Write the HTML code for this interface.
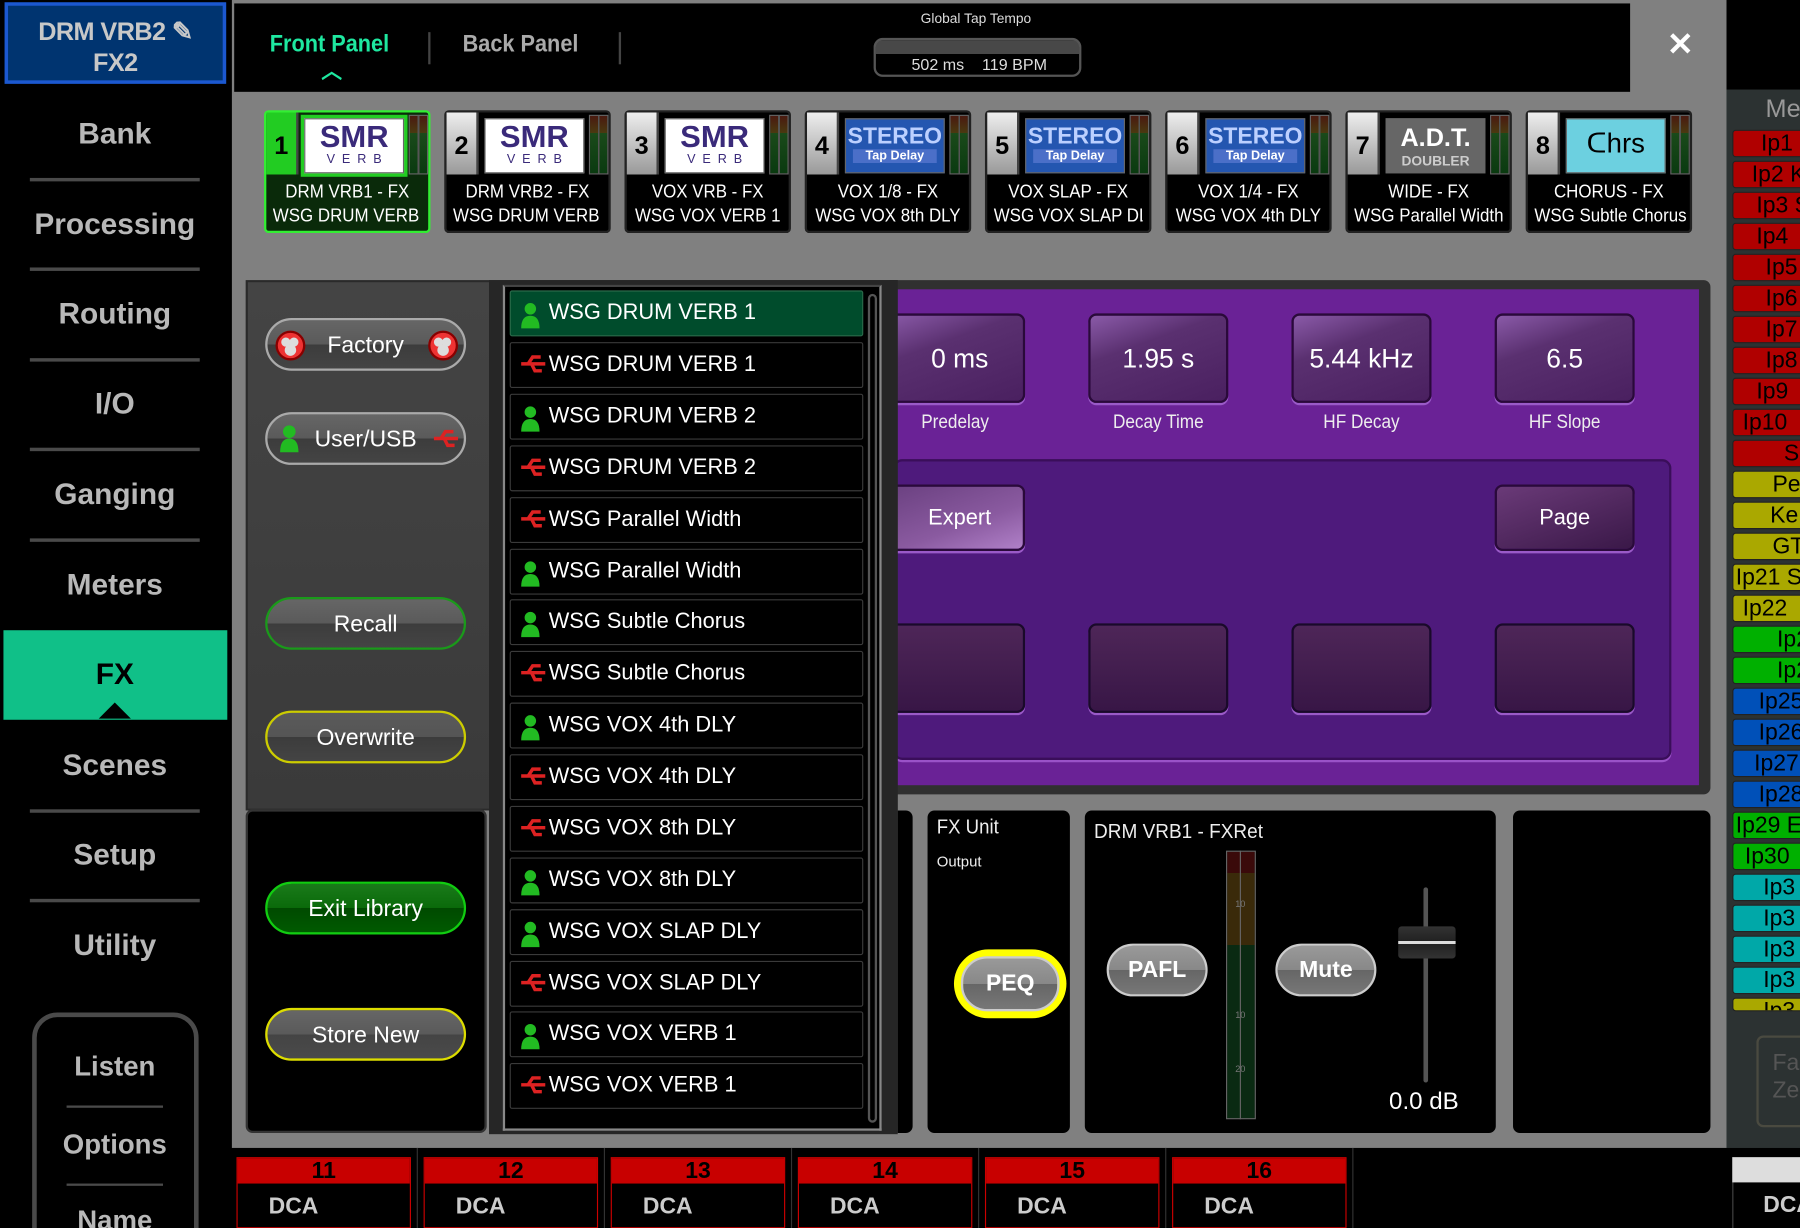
<!DOCTYPE html>
<html><head><meta charset="utf-8">
<style>
*{margin:0;padding:0;box-sizing:border-box}
html,body{width:1800px;height:1228px;overflow:hidden;background:#000;font-family:"Liberation Sans",Arial,sans-serif}
#w{position:absolute;left:0;top:0;width:1568px;height:1070px;transform:scale(1.14796);transform-origin:0 0;background:#000;overflow:hidden}
.a{position:absolute}
.nav{position:absolute;left:0;width:200px;text-align:center;color:#b8b8b8;font-size:26px;font-weight:bold}
.sep{position:absolute;left:26px;width:148px;height:3px;background:#4a4a4a}
.card{position:absolute;top:96px;width:145px;height:107px;background:#000;border-radius:4px;border:2px solid #222}
.card .num{position:absolute;left:0;top:0;width:28px;height:54px;background:linear-gradient(#eee,#999);color:#000;font-size:22px;font-weight:bold;text-align:center;line-height:58px;border-right:2px solid #444}
.card .logo{position:absolute;left:30px;top:2px;width:93px;height:54px;background:#000;padding:3px}
.card .logo div{width:100%;height:100%;border:1px solid #666}
.card .met{position:absolute;left:124px;top:2px;width:17px;height:52px;background:linear-gradient(90deg,transparent 0 45%,#555 45% 55%,transparent 55%),linear-gradient(#4a1a10 0%,#4a3a10 30%,#1a4a1a 30%,#0a3a10 100%);border:1px solid #666}
.card .t1{position:absolute;left:0;right:0;top:61px;text-align:center;color:#fff;font-size:16px;transform:scaleX(.92)}
.card .t2{position:absolute;left:0;right:0;top:82px;text-align:center;color:#fff;font-size:16px;transform:scaleX(.92);white-space:nowrap}
.smr{background:#fff;color:#3a2a7a;text-align:center;font-weight:bold;font-size:27px;line-height:27px;padding-top:2px}
.smr span{display:block;font-size:11px;letter-spacing:6px;font-weight:normal;line-height:12px;margin-left:6px}
.st{background:#2456b0;color:#bcd0ff;text-align:center;font-weight:bold;font-size:20px;line-height:22px;padding-top:4px}
.st span{display:block;font-size:11px;line-height:12px;background:#4b6fc8;margin:0 6px;color:#fff}
.row{position:absolute;left:444px;width:308px;height:40px;background:#000;border:1px solid #3a3a3a;border-radius:2px;color:#fff;font-size:19px;line-height:38px;padding-left:33px}
.row svg{position:absolute;left:8px;top:9px}
.pill{position:absolute;left:231px;width:175px;height:46px;border-radius:23px;background:linear-gradient(#666 0%,#5a5a5a 50%,#3c3c3c 50%,#444 100%);color:#fff;font-size:20px;text-align:center;line-height:44px;border:2px solid #aaa}
.kb{position:absolute;top:273px;width:122px;height:78px;border-radius:7px;background:linear-gradient(160deg,#8a5aa8 0%,#5a3070 35%,#4a2060 100%);border:2px solid #2a0a3a;box-shadow:0 2px 0 #9a5ac8;color:#fff;font-size:23px;text-align:center;line-height:74px}
.kl{position:absolute;top:358px;width:122px;text-align:center;color:#eee;font-size:17px;transform:scaleX(.88)}
.eb{position:absolute;top:543px;width:122px;height:78px;border-radius:7px;background:linear-gradient(#4e2658,#381646);border:2px solid #1a0a2a;box-shadow:0 2px 0 #9a5ac8}
.gb{position:absolute;height:46px;border-radius:23px;background:linear-gradient(#999 0%,#888 50%,#666 50%,#777 100%);border:2px solid #ccc;color:#fff;font-size:20px;font-weight:bold;text-align:center;line-height:42px}
.dca{position:absolute;top:1008px;width:152px;height:62px;border:1px solid #c00;background:#000}
.dca .h{height:22px;background:#c80000;color:#000;font-size:20px;font-weight:bold;text-align:center;line-height:22px}
.dca .d{color:#ccc;font-size:20px;font-weight:bold;padding:9px 0 0 27px}
.ip{position:absolute;left:1509px;width:70px;height:24px;border:1px solid #222;border-radius:3px;color:#000;font-size:20px;line-height:22px;padding-left:6px;white-space:nowrap;overflow:hidden}
.r{background:#b00000}.y{background:#aaa800}.g{background:#00b000}.b{background:#0050b8}.c{background:#00a8a8}
</style></head><body><div id="w">

<div class="a" style="left:4px;top:2px;width:193px;height:71px;background:#003470;border:3px solid #1c58d0;color:#c8c8c8;font-size:22px;font-weight:bold;text-align:center;line-height:27px;padding-top:9px;letter-spacing:-0.5px">DRM VRB2 ✎<br>FX2</div>
<div class="nav" style="top:101px">Bank</div><div class="sep" style="top:155px"></div>
<div class="nav" style="top:180px">Processing</div><div class="sep" style="top:233px"></div>
<div class="nav" style="top:258px">Routing</div><div class="sep" style="top:312px"></div>
<div class="nav" style="top:336px">I/O</div><div class="sep" style="top:390px"></div>
<div class="nav" style="top:415px">Ganging</div><div class="sep" style="top:469px"></div>
<div class="nav" style="top:494px">Meters</div>
<div class="a" style="left:3px;top:549px;width:195px;height:78px;background:#10c088"></div>
<div class="nav" style="top:572px;color:#000">FX</div>
<div class="a" style="left:86px;top:612px;width:0;height:0;border-left:14px solid transparent;border-right:14px solid transparent;border-bottom:14px solid #000"></div>
<div class="nav" style="top:651px">Scenes</div><div class="sep" style="top:705px"></div>
<div class="nav" style="top:729px">Setup</div><div class="sep" style="top:783px"></div>
<div class="nav" style="top:808px">Utility</div>
<div class="a" style="left:28px;top:882px;width:145px;height:220px;border:4px solid #4a4a4a;border-radius:22px"></div>
<div class="nav" style="top:916px;font-size:24px">Listen</div><div class="a" style="left:58px;top:963px;width:84px;height:2px;background:#4a4a4a"></div>
<div class="nav" style="top:984px;font-size:24px">Options</div><div class="a" style="left:58px;top:1031px;width:84px;height:2px;background:#4a4a4a"></div>
<div class="nav" style="top:1050px;font-size:24px">Name</div>

<div class="a" style="left:202px;top:0;width:1302px;height:1000px;background:#808080"></div>
<div class="a" style="left:204px;top:3px;width:1216px;height:77px;background:#000"></div>
<div class="a" style="left:235px;top:27px;color:#1ee8a0;font-size:21px;font-weight:bold;transform:scaleX(.9);transform-origin:0 0">Front Panel</div>
<div class="a" style="left:280px;top:48px;color:#1ee8a0;font-size:18px;font-weight:bold">︿</div>
<div class="a" style="left:373px;top:28px;width:2px;height:28px;background:#444"></div>
<div class="a" style="left:403px;top:27px;color:#aaa;font-size:21px;font-weight:bold;transform:scaleX(.9);transform-origin:0 0">Back Panel</div>
<div class="a" style="left:539px;top:28px;width:2px;height:28px;background:#444"></div>
<div class="a" style="left:802px;top:9px;color:#ddd;font-size:12px">Global Tap Tempo</div>
<div class="a" style="left:761px;top:33px;width:181px;height:34px;border:2px solid #555;border-radius:8px;background:linear-gradient(#484848 0 40%,#000 40%)"></div>
<div class="a" style="left:794px;top:48px;color:#ddd;font-size:14px">502 ms&nbsp;&nbsp;&nbsp;&nbsp;119 BPM</div>
<div class="a" style="left:1452px;top:22px;color:#fff;font-size:28px;font-weight:bold">✕</div>

<div class="card" style="left:230px;background:#0a2a0a;border-color:#3e3"><div class="num" style="background:#2c2">1</div><div class="logo" style="background:#2c2"><div class="smr">SMR<span>VERB</span></div></div><div class="met"></div><div class="t1">DRM VRB1 - FX</div><div class="t2" style="height:20px;overflow:hidden">WSG DRUM VERB 1</div></div>
<div class="card" style="left:387px"><div class="num">2</div><div class="logo"><div class="smr">SMR<span>VERB</span></div></div><div class="met"></div><div class="t1">DRM VRB2 - FX</div><div class="t2" style="height:20px;overflow:hidden">WSG DRUM VERB 2</div></div>
<div class="card" style="left:544px"><div class="num">3</div><div class="logo"><div class="smr">SMR<span>VERB</span></div></div><div class="met"></div><div class="t1">VOX VRB - FX</div><div class="t2">WSG VOX VERB 1</div></div>
<div class="card" style="left:701px"><div class="num">4</div><div class="logo"><div class="st">STEREO<span>Tap Delay</span></div></div><div class="met"></div><div class="t1">VOX 1/8 - FX</div><div class="t2">WSG VOX 8th DLY</div></div>
<div class="card" style="left:858px"><div class="num">5</div><div class="logo"><div class="st">STEREO<span>Tap Delay</span></div></div><div class="met"></div><div class="t1">VOX SLAP - FX</div><div class="t2" style="height:20px;overflow:hidden">WSG VOX SLAP DLY</div></div>
<div class="card" style="left:1015px"><div class="num">6</div><div class="logo"><div class="st">STEREO<span>Tap Delay</span></div></div><div class="met"></div><div class="t1">VOX 1/4 - FX</div><div class="t2">WSG VOX 4th DLY</div></div>
<div class="card" style="left:1172px"><div class="num">7</div><div class="logo"><div style="background:#666;color:#fff;text-align:center;font-weight:bold;font-size:22px;line-height:26px;padding-top:3px">A.D.T.<span style="display:block;font-size:12px;color:#ccc;line-height:14px">DOUBLER</span></div></div><div class="met"></div><div class="t1">WIDE - FX</div><div class="t2">WSG Parallel Width</div></div>
<div class="card" style="left:1329px"><div class="num">8</div><div class="logo"><div style="background:#6cd0e0;color:#000;text-align:center;font-size:24px;line-height:44px">ᑕhrs</div></div><div class="met"></div><div class="t1">CHORUS - FX</div><div class="t2">WSG Subtle Chorus</div></div>

<div class="a" style="left:770px;top:244px;width:720px;height:448px;background:#303030;border-radius:6px"></div>
<div class="a" style="left:778px;top:252px;width:702px;height:432px;background:#6a2296"></div>
<div class="a" style="left:778px;top:400px;width:678px;height:262px;background:#4e1a7c;border:2px solid #3a0e5a;border-radius:8px;box-shadow:0 2px 0 #9a52c8"></div>
<div class="kb" style="left:771px;padding-left:8px">0 ms</div><div class="kl" style="left:771px">Predelay</div>
<div class="kb" style="left:948px">1.95 s</div><div class="kl" style="left:948px">Decay Time</div>
<div class="kb" style="left:1125px">5.44 kHz</div><div class="kl" style="left:1125px">HF Decay</div>
<div class="kb" style="left:1302px">6.5</div><div class="kl" style="left:1302px">HF Slope</div>
<div class="kb" style="left:771px;top:422px;height:58px;line-height:56px;font-size:19px;background:linear-gradient(160deg,#6a4080,#8a5aa0 60%,#b080c8);padding-left:8px">Expert</div>
<div class="kb" style="left:1302px;top:422px;height:58px;line-height:56px;font-size:19px;background:linear-gradient(160deg,#6a3a78,#3a1848)">Page</div>
<div class="eb" style="left:771px"></div><div class="eb" style="left:948px"></div><div class="eb" style="left:1125px"></div><div class="eb" style="left:1302px"></div>

<div class="a" style="left:214px;top:244px;width:568px;height:462px;background:linear-gradient(#444,#3a3a3a);border:2px solid #2a2a2a"></div>
<div class="a" style="left:214px;top:705px;width:210px;height:282px;background:#000;border:2px solid #333;border-radius:6px"></div>
<div class="a" style="left:426px;top:244px;width:356px;height:744px;background:#262626"></div>
<div class="a" style="left:438px;top:248px;width:330px;height:737px;background:#000;border:2px solid #888;border-top-color:#444"></div>
<div class="a" style="left:756px;top:256px;width:8px;height:722px;border:2px solid #555;border-radius:4px"></div>

<div class="pill" style="top:277px">Factory
<svg class="a" style="left:6px;top:8px" width="28" height="28"><circle cx="14" cy="14" r="12" fill="#e33" stroke="#800" stroke-width="2"/><circle cx="10" cy="11" r="4" fill="#ddd"/><circle cx="17" cy="11" r="4" fill="#ddd"/><circle cx="14" cy="18" r="5" fill="#ddd"/></svg>
<svg class="a" style="left:139px;top:8px" width="28" height="28"><circle cx="14" cy="14" r="12" fill="#e33" stroke="#800" stroke-width="2"/><circle cx="10" cy="11" r="4" fill="#ddd"/><circle cx="17" cy="11" r="4" fill="#ddd"/><circle cx="14" cy="18" r="5" fill="#ddd"/></svg></div>
<div class="pill" style="top:359px">User/USB
<svg class="a" style="left:10px;top:8px" width="18" height="26"><circle cx="9" cy="7" r="5.5" fill="#2b2"/><path d="M1 25Q1 13 9 13Q17 13 17 25Z" fill="#2b2"/></svg>
<svg class="a" style="left:144px;top:12px" width="24" height="18"><path d="M1 9H22M7 9L11 3H18M10 9L13 15H19" stroke="#d22" stroke-width="3" fill="none"/></svg></div>
<div class="pill" style="top:520px;border-color:#1a9a1a">Recall</div>
<div class="pill" style="top:619px;border-color:#cc0;background:linear-gradient(#5a5a5a 0%,#555 50%,#3c3c3c 50%,#444 100%)">Overwrite</div>
<div class="pill" style="top:768px;border-color:#1c1;background:linear-gradient(#1a7a1a 0%,#0a6a0a 50%,#004a00 50%,#005a00 100%)">Exit Library</div>
<div class="pill" style="top:878px;border-color:#dd0;background:linear-gradient(#666 0%,#5a5a5a 50%,#444 50%,#4a4a4a 100%)">Store New</div>

<div class="row" style="top:253px;background:#004c2c;border-color:#2a6a4a"><svg width="18" height="24"><circle cx="9" cy="6" r="5" fill="#2b2"/><path d="M1 23Q1 12 9 12Q17 12 17 23Z" fill="#2b2"/></svg>WSG DRUM VERB 1</div>
<div class="row" style="top:298px"><svg width="24" height="18"><path d="M1 9H22M7 9L11 3H18M10 9L13 15H19" stroke="#d22" stroke-width="3" fill="none"/></svg>WSG DRUM VERB 1</div>
<div class="row" style="top:343px"><svg width="18" height="24"><circle cx="9" cy="6" r="5" fill="#2b2"/><path d="M1 23Q1 12 9 12Q17 12 17 23Z" fill="#2b2"/></svg>WSG DRUM VERB 2</div>
<div class="row" style="top:388px"><svg width="24" height="18"><path d="M1 9H22M7 9L11 3H18M10 9L13 15H19" stroke="#d22" stroke-width="3" fill="none"/></svg>WSG DRUM VERB 2</div>
<div class="row" style="top:433px"><svg width="24" height="18"><path d="M1 9H22M7 9L11 3H18M10 9L13 15H19" stroke="#d22" stroke-width="3" fill="none"/></svg>WSG Parallel Width</div>
<div class="row" style="top:478px"><svg width="18" height="24"><circle cx="9" cy="6" r="5" fill="#2b2"/><path d="M1 23Q1 12 9 12Q17 12 17 23Z" fill="#2b2"/></svg>WSG Parallel Width</div>
<div class="row" style="top:522px"><svg width="18" height="24"><circle cx="9" cy="6" r="5" fill="#2b2"/><path d="M1 23Q1 12 9 12Q17 12 17 23Z" fill="#2b2"/></svg>WSG Subtle Chorus</div>
<div class="row" style="top:567px"><svg width="24" height="18"><path d="M1 9H22M7 9L11 3H18M10 9L13 15H19" stroke="#d22" stroke-width="3" fill="none"/></svg>WSG Subtle Chorus</div>
<div class="row" style="top:612px"><svg width="18" height="24"><circle cx="9" cy="6" r="5" fill="#2b2"/><path d="M1 23Q1 12 9 12Q17 12 17 23Z" fill="#2b2"/></svg>WSG VOX 4th DLY</div>
<div class="row" style="top:657px"><svg width="24" height="18"><path d="M1 9H22M7 9L11 3H18M10 9L13 15H19" stroke="#d22" stroke-width="3" fill="none"/></svg>WSG VOX 4th DLY</div>
<div class="row" style="top:702px"><svg width="24" height="18"><path d="M1 9H22M7 9L11 3H18M10 9L13 15H19" stroke="#d22" stroke-width="3" fill="none"/></svg>WSG VOX 8th DLY</div>
<div class="row" style="top:747px"><svg width="18" height="24"><circle cx="9" cy="6" r="5" fill="#2b2"/><path d="M1 23Q1 12 9 12Q17 12 17 23Z" fill="#2b2"/></svg>WSG VOX 8th DLY</div>
<div class="row" style="top:792px"><svg width="18" height="24"><circle cx="9" cy="6" r="5" fill="#2b2"/><path d="M1 23Q1 12 9 12Q17 12 17 23Z" fill="#2b2"/></svg>WSG VOX SLAP DLY</div>
<div class="row" style="top:837px"><svg width="24" height="18"><path d="M1 9H22M7 9L11 3H18M10 9L13 15H19" stroke="#d22" stroke-width="3" fill="none"/></svg>WSG VOX SLAP DLY</div>
<div class="row" style="top:881px"><svg width="18" height="24"><circle cx="9" cy="6" r="5" fill="#2b2"/><path d="M1 23Q1 12 9 12Q17 12 17 23Z" fill="#2b2"/></svg>WSG VOX VERB 1</div>
<div class="row" style="top:926px"><svg width="24" height="18"><path d="M1 9H22M7 9L11 3H18M10 9L13 15H19" stroke="#d22" stroke-width="3" fill="none"/></svg>WSG VOX VERB 1</div>

<div class="a" style="left:782px;top:706px;width:13px;height:281px;background:#000;border-radius:0 6px 6px 0"></div>
<div class="a" style="left:808px;top:706px;width:124px;height:281px;background:#000;border-radius:6px"></div>
<div class="a" style="left:816px;top:710px;color:#eee;font-size:18px;transform:scaleX(.9);transform-origin:0 0">FX Unit</div>
<div class="a" style="left:816px;top:743px;color:#eee;font-size:13px">Output</div>
<div class="a" style="left:831px;top:827px;width:98px;height:60px;border-radius:30px;background:#ff0"></div>
<div class="gb" style="left:837px;top:833px;width:86px;height:48px;line-height:44px">PEQ</div>
<div class="a" style="left:945px;top:706px;width:358px;height:281px;background:#000;border-radius:6px"></div>
<div class="a" style="left:953px;top:714px;color:#eee;font-size:18px;transform:scaleX(.92);transform-origin:0 0">DRM VRB1 - FXRet</div>
<div class="a" style="left:1068px;top:741px;width:26px;height:234px;border:1px solid #666;background:linear-gradient(#3a0a0a 0%,#3a0a0a 8%,#3a2a0a 8%,#3a2a0a 35%,#0a2a12 35%,#0a2a12 100%)"></div>
<div class="a" style="left:1080px;top:741px;width:1px;height:234px;background:#666"></div>
<div class="a" style="left:1076px;top:783px;color:#777;font-size:8px">10</div>
<div class="a" style="left:1076px;top:880px;color:#777;font-size:8px">10</div>
<div class="a" style="left:1076px;top:927px;color:#777;font-size:8px">20</div>
<div class="gb" style="left:964px;top:822px;width:88px">PAFL</div>
<div class="gb" style="left:1111px;top:822px;width:88px">Mute</div>
<div class="a" style="left:1240px;top:773px;width:4px;height:170px;background:#555;border-radius:2px"></div>
<div class="a" style="left:1218px;top:807px;width:50px;height:28px;background:linear-gradient(#333,#222 45%,#ddd 45%,#ddd 55%,#222 55%,#333);border-radius:3px"></div>
<div class="a" style="left:1210px;top:948px;color:#fff;font-size:21px">0.0 dB</div>
<div class="a" style="left:1318px;top:706px;width:172px;height:281px;background:#000;border-radius:6px"></div>

<div class="a" style="left:202px;top:1000px;width:1302px;height:70px;background:#000"></div>
<div class="a" style="left:363px;top:1000px;width:1px;height:70px;background:#333"></div>
<div class="a" style="left:526px;top:1000px;width:1px;height:70px;background:#333"></div>
<div class="a" style="left:689px;top:1000px;width:1px;height:70px;background:#333"></div>
<div class="a" style="left:852px;top:1000px;width:1px;height:70px;background:#333"></div>
<div class="a" style="left:1015px;top:1000px;width:1px;height:70px;background:#333"></div>
<div class="a" style="left:1178px;top:1000px;width:1px;height:70px;background:#333"></div>
<div class="dca" style="left:206px"><div class="h">11</div><div class="d">DCA</div></div>
<div class="dca" style="left:369px"><div class="h">12</div><div class="d">DCA</div></div>
<div class="dca" style="left:532px"><div class="h">13</div><div class="d">DCA</div></div>
<div class="dca" style="left:695px"><div class="h">14</div><div class="d">DCA</div></div>
<div class="dca" style="left:858px"><div class="h">15</div><div class="d">DCA</div></div>
<div class="dca" style="left:1021px"><div class="h">16</div><div class="d">DCA</div></div>

<div class="a" style="left:1504px;top:0;width:64px;height:78px;background:#000"></div>
<div class="a" style="left:1504px;top:78px;width:64px;height:922px;background:#2c3232"></div>
<div class="a" style="left:1538px;top:82px;color:#999;font-size:22px">Me</div>
<div class="ip r" style="top:113px;padding-left:24px">Ip1</div>
<div class="ip r" style="top:140px;padding-left:16px">Ip2 K</div>
<div class="ip r" style="top:167px;padding-left:20px">Ip3 S</div>
<div class="ip r" style="top:194px;padding-left:20px">Ip4</div>
<div class="ip r" style="top:221px;padding-left:28px">Ip5</div>
<div class="ip r" style="top:248px;padding-left:28px">Ip6</div>
<div class="ip r" style="top:275px;padding-left:28px">Ip7</div>
<div class="ip r" style="top:302px;padding-left:28px">Ip8</div>
<div class="ip r" style="top:329px;padding-left:20px">Ip9</div>
<div class="ip r" style="top:356px;padding-left:8px">Ip10</div>
<div class="ip r" style="top:383px;padding-left:44px">S</div>
<div class="ip y" style="top:410px;padding-left:34px">Pe</div>
<div class="ip y" style="top:437px;padding-left:32px">Ke</div>
<div class="ip y" style="top:464px;padding-left:34px">GT</div>
<div class="ip y" style="top:491px;padding-left:2px">Ip21 S</div>
<div class="ip y" style="top:518px;padding-left:8px">Ip22</div>
<div class="ip g" style="top:545px;padding-left:38px">Ip2</div>
<div class="ip g" style="top:572px;padding-left:38px">Ip2</div>
<div class="ip b" style="top:599px;padding-left:22px">Ip25</div>
<div class="ip b" style="top:626px;padding-left:22px">Ip26</div>
<div class="ip b" style="top:653px;padding-left:18px">Ip27</div>
<div class="ip b" style="top:680px;padding-left:22px">Ip28</div>
<div class="ip g" style="top:707px;padding-left:2px">Ip29 E</div>
<div class="ip g" style="top:734px;padding-left:10px">Ip30</div>
<div class="ip c" style="top:761px;padding-left:26px">Ip3</div>
<div class="ip c" style="top:788px;padding-left:26px">Ip3</div>
<div class="ip c" style="top:815px;padding-left:26px">Ip3</div>
<div class="ip c" style="top:842px;padding-left:26px">Ip3</div>
<div class="ip y" style="top:869px;height:12px;padding-left:26px">Ip3</div>
<div class="a" style="left:1530px;top:902px;width:50px;height:80px;border:2px solid #4a4a40;border-radius:6px;color:#555;font-size:20px;line-height:24px;padding:10px 0 0 12px">Fa<br>Ze</div>
<div class="a" style="left:1509px;top:1008px;width:60px;height:62px;background:#000;border-left:1px solid #444"></div>
<div class="a" style="left:1509px;top:1008px;width:60px;height:22px;background:#ddd"></div>
<div class="a" style="left:1536px;top:1039px;color:#ccc;font-size:20px;font-weight:bold">DCA</div>

</div></body></html>
